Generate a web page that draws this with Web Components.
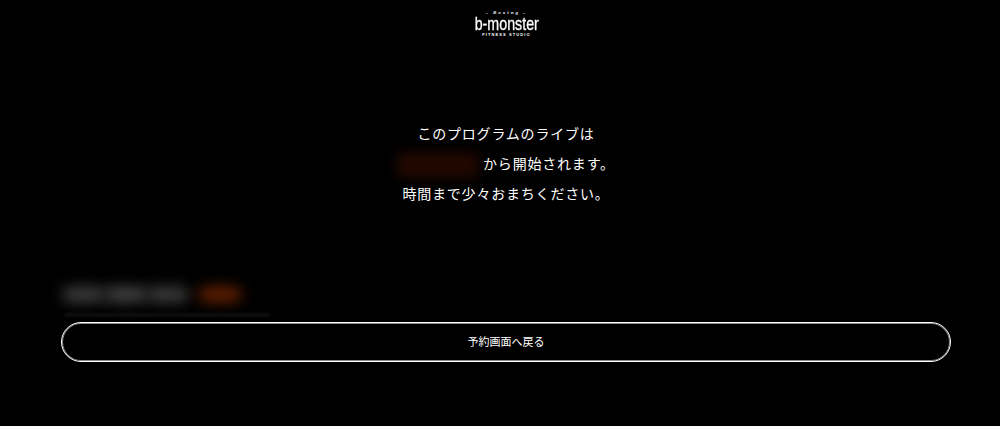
<!DOCTYPE html>
<html lang="ja">
<head>
<meta charset="utf-8">
<title>b-monster</title>
<style>
  html, body { margin: 0; background: #000; }
  body { width: 1000px; height: 426px; overflow: hidden; color: #fff; font-family: "Noto Sans CJK JP", sans-serif; }
</style>
</head>
<body>
<bm-page>
  <bm-logo slot="logo"></bm-logo>
  <bm-notice slot="notice">
    <div>このプログラムのライブは</div>
    <div><bm-blur color="#220800" width="82" height="24" radius="4"></bm-blur> から開始されます。</div>
    <div>時間まで少々おまちください。</div>
  </bm-notice>
  <bm-lesson slot="lesson"></bm-lesson>
  <bm-pill-button slot="action">予約画面へ戻る</bm-pill-button>
</bm-page>

<script>
class BmPage extends HTMLElement {
  constructor() {
    super();
    this.attachShadow({ mode: 'open' });
    this.shadowRoot.innerHTML = `
      <style>
        :host { display: flex; flex-direction: column; height: 426px; }
        header { display: flex; justify-content: center; padding-left: 13px; height: 118px; }
        main { display: flex; justify-content: center; padding-left: 12px; height: 158px; }
        section { padding: 0 49px 0 61px; }
      </style>
      <header><slot name="logo"></slot></header>
      <main><slot name="notice"></slot></main>
      <section>
        <slot name="lesson"></slot>
        <slot name="action"></slot>
      </section>
    `;
  }
}
customElements.define('bm-page', BmPage);

class BmLogo extends HTMLElement {
  constructor() {
    super();
    this.attachShadow({ mode: 'open' });
    this.shadowRoot.innerHTML = `
      <style>
        :host { display: flex; flex-direction: column; align-items: center; padding-top: 10px; width: 70px; color: #fff; font-family: "Liberation Sans", sans-serif; line-height: 1; }
        .top { font: italic 700 5px/6px "Liberation Serif", serif; letter-spacing: 2px; }
        .name { font-size: 19px; font-weight: 400; line-height: 16px; transform: scaleX(.75); white-space: nowrap; -webkit-text-stroke: .3px #fff; }
        .sub { font-size: 4px; font-weight: 700; line-height: 5px; letter-spacing: 1.1px; white-space: nowrap; }
      </style>
      <div class="top">- Boxing -</div>
      <div class="name">b-monster</div>
      <div class="sub">FITNESS STUDIO</div>
    `;
  }
}
customElements.define('bm-logo', BmLogo);

class BmNotice extends HTMLElement {
  constructor() {
    super();
    this.attachShadow({ mode: 'open' });
    this.shadowRoot.innerHTML = `
      <style>
        :host { display: block; text-align: center; font-size: 14px; line-height: 30px; letter-spacing: .8px; white-space: nowrap; --blur: 6px; }
      </style>
      <slot></slot>
    `;
  }
}
customElements.define('bm-notice', BmNotice);

// redacted values in the reference, they are only blurred colour patches
class BmBlur extends HTMLElement {
  constructor() {
    super();
    this.attachShadow({ mode: 'open' });
    this.shadowRoot.innerHTML = `
      <style>
        :host { display: inline-block; vertical-align: middle; filter: blur(var(--blur, 3px)); }
      </style>
    `;
  }
  connectedCallback() {
    this.style.background = this.getAttribute('color');
    this.style.width = this.getAttribute('width') + 'px';
    this.style.height = this.getAttribute('height') + 'px';
    this.style.borderRadius = (this.getAttribute('radius') || 0) + 'px';
  }
}
customElements.define('bm-blur', BmBlur);

class BmLesson extends HTMLElement {
  constructor() {
    super();
    this.attachShadow({ mode: 'open' });
    this.shadowRoot.innerHTML = `
      <style>
        :host { display: block; height: 46px; --blur: 7px; }
        .row { display: flex; gap: 0; padding-left: 2px; height: 37px; align-items: center; }
        .last { margin-left: 11px; }
        .rule { width: 205px; height: 4px; margin-left: 4px; background: #0e0e0e; filter: blur(1px); }
      </style>
      <div class="row">
        <bm-blur color="#3e3e3e" width="42" height="15" radius="6"></bm-blur>
        <bm-blur color="#444" width="42" height="15" radius="6"></bm-blur>
        <bm-blur color="#3e3e3e" width="41" height="15" radius="6"></bm-blur>
        <bm-blur class="last" color="#662000" width="42" height="15" radius="6"></bm-blur>
      </div>
      <div class="rule"></div>
    `;
  }
}
customElements.define('bm-lesson', BmLesson);

class BmPillButton extends HTMLElement {
  constructor() {
    super();
    this.attachShadow({ mode: 'open' });
    this.shadowRoot.innerHTML = `
      <style>
        :host { display: block; }
        a { display: flex; align-items: center; justify-content: center; box-sizing: border-box; height: 40px; padding-bottom: 2px; border: 1px solid #fff; box-shadow: inset 0 0 0 1px #8a8a8a; border-radius: 20px; color: #fff; font-size: 11px; text-decoration: none; cursor: pointer; }
      </style>
      <a><slot></slot></a>
    `;
  }
}
customElements.define('bm-pill-button', BmPillButton);
</script>
</body>
</html>
